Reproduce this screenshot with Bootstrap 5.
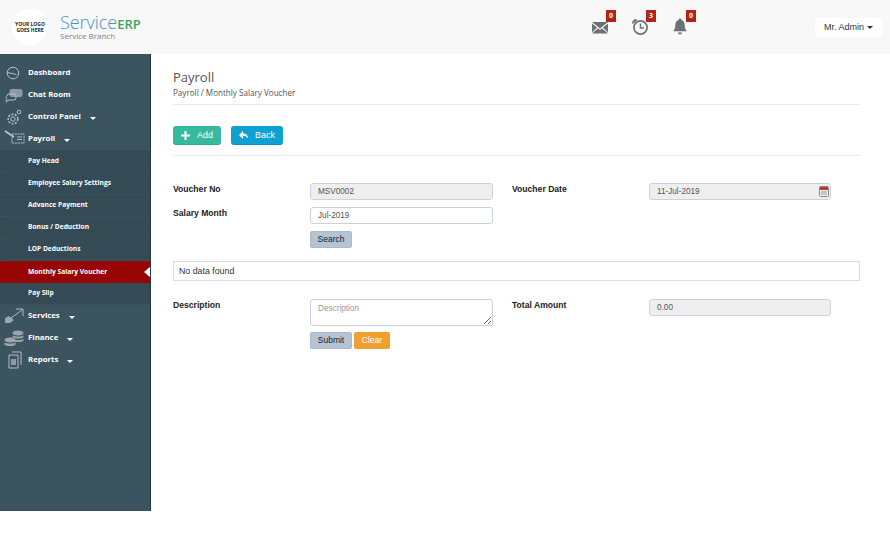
<!DOCTYPE html>
<html lang="en">
<head>
<meta charset="utf-8">
<title>Monthly Salary Voucher</title>
<link href="https://cdn.jsdelivr.net/npm/bootstrap@5.3.0/dist/css/bootstrap.min.css" rel="stylesheet">
<style>
html,body{height:100%;background:#fff;overflow:hidden}
body{font-family:"Liberation Sans",Arial,sans-serif;font-size:9px;color:#333}
.top-bar{height:54px;background:#f8f8f8;padding-left:12px}
.logo-disc{width:36px;height:36px;border-radius:50%;background:#fff;font:700 5px/6.5px "Open Sans",sans-serif;color:#222;text-align:center;flex:none}
.brand-box{margin-left:12px;line-height:1;width:82px;flex:none;margin-top:-2px}
.brand-name{font:300 18px/20px "Open Sans",sans-serif;color:#3f96c9;letter-spacing:-.05px;height:20px;display:flex;align-items:baseline}
.brand-name b{font:600 13px/14px "Open Sans",sans-serif;color:#3aa55c;letter-spacing:0}
.brand-sub{font:400 8px/9px "Open Sans",sans-serif;color:#78828a;margin-top:-1px}
.alert-set{margin-left:449px;gap:21px;margin-top:-1px}
.alert-item{position:relative;width:19px;height:19px}
.alert-item svg{display:block}
.alert-count{position:absolute;top:-7px;right:-6px;min-width:10px;height:12px;background:#b5221b;color:#fff;font:700 7px/12px "Open Sans",sans-serif;text-align:center}
.user-chip{margin-left:auto;margin-right:8px;width:67px;height:19px;background:#fff;border-radius:3px;font-size:9px;line-height:19px;text-align:center;color:#333}
.tri{display:inline-block;width:0;height:0;border-left:3px solid transparent;border-right:3px solid transparent;border-top:3px solid currentColor;vertical-align:middle;margin-left:3px}
.page-body{height:457px}
.side-nav{width:151px;background:#3c5360;border-right:1px solid #26363f;padding-top:8px;flex:none}
.menu-row{height:22.1px;display:flex;align-items:center;color:#fff;font:700 7.8px/1 "Open Sans",sans-serif;padding-left:28px;position:relative;text-decoration:none}
.menu-row .tri{margin-left:9px;margin-top:2px}
.menu-row svg{position:absolute;left:4px;top:2px}
.sub-row{background:#344a55;font-size:6.65px;border-bottom:1px dotted #3c5360}
.sub-active{background:#980505;border-bottom:0}
.sub-active::after{content:"";position:absolute;right:0;top:6px;border:5px solid transparent;border-right:6px solid #fff;border-left:0}
.work-area{flex:1;padding:15px 30px 0 22px;min-width:0}
.page-title{font:400 13px/16px "Open Sans",sans-serif;color:#555;margin:0}
.crumb{font:400 8.1px/12px "Open Sans",sans-serif;color:#555;margin-top:2px}
.rule-line{height:1px;background:#e9e9e9;border:0;opacity:1;margin:0}
.title-rule{margin-top:5px}
.action-row{gap:10px;padding:21px 0 10px}
.act-btn{height:19px;padding:0;border:0;border-bottom:1px solid rgba(0,0,0,.1);border-radius:3px;color:#fff;font-size:9px;line-height:18px;display:flex;align-items:center;justify-content:center;gap:7px}
.act-add{width:48px;background:#36b99f}
.act-back{width:52px;background:#0ea2d2}
.form-sheet{display:grid;grid-template-columns:137px 183px 19px 137px 182px;margin-top:27px;align-items:start}
.upper-sheet{margin-top:27px}
.field-label{font-weight:700;font-size:8.6px;line-height:12px;color:#222;margin:0}
.field-box.form-control{height:17px;min-height:17px;font-size:8.2px;line-height:13px;padding:1px 7px;border:1px solid #c9d3dc;border-radius:3px;color:#555;background-color:#fff;box-shadow:none}
.field-box.form-control:disabled{background-color:#eee}
.field-box.form-control::placeholder{color:#999}
textarea.field-box.form-control{height:27px;padding-top:2px}
.date-wrap{position:relative}
.date-wrap svg{position:absolute;right:2px;top:3px}
.row-gap{grid-column:1/-1;height:7px}
.form-btn{height:17px;padding:0;border:1px solid transparent;border-radius:2px;font-size:8.5px;line-height:15px}
.btn-slate{width:42px;background:#b4c4d4;color:#222;border-color:#a9bacb}
.btn-amber{width:36px;background:#f0a030;color:#fff;margin-left:2px}
.empty-note{height:20px;border:1px solid #ddd;margin-top:13px;padding-left:5px;font-size:8.8px;line-height:18px;color:#333}
.form-sheet.lower-sheet{margin-top:18px}
.search-gap{margin-top:7px}
.ctl-gap{margin-top:6px}
</style>
</head>
<body>
<header class="top-bar d-flex align-items-center">
  <div class="logo-disc d-flex align-items-center justify-content-center">YOUR LOGO<br>GOES HERE</div>
  <div class="brand-box">
    <div class="brand-name">Service<b>ERP</b></div>
    <div class="brand-sub">Service Branch</div>
  </div>
  <div class="alert-set d-flex align-items-center">
    <div class="alert-item">
      <svg width="18" height="19" viewBox="0 0 18 19"><path fill="#6b7176" d="M1 5h16L9 11.500zM1 6.500v9l5-5zM17 6.500v9l-5-5zM1 16.500l6-5.200 2 1.600 2-1.600 6 5.200z"/></svg>
      <span class="alert-count">0</span>
    </div>
    <div class="alert-item">
      <svg width="19" height="19" viewBox="0 0 19 19"><circle cx="9.500" cy="10.500" r="6.600" fill="none" stroke="#6b7176" stroke-width="1.700"/><path d="M9.500 6.500v4.500h3.500" fill="none" stroke="#6b7176" stroke-width="1.500"/><path fill="#6b7176" d="M1 6.500C1 4 3 2 5.500 2L6 3.200 2 6.800z"/></svg>
      <span class="alert-count">3</span>
    </div>
    <div class="alert-item">
      <svg width="19" height="19" viewBox="0 0 19 19"><path fill="#6b7176" d="M9 1.500c.9 0 1.400.6 1.400 1.400 2.300.8 3.300 2.800 3.300 5.400 0 3 1 4.700 2.300 6H2c1.300-1.300 2.300-3 2.300-6 0-2.600 1-4.600 3.300-5.400C7.600 2.100 8.100 1.500 9 1.500zM7 15.500h4c0 1.200-.9 2-2 2s-2-.8-2-2z"/></svg>
      <span class="alert-count">0</span>
    </div>
  </div>
  <div class="user-chip">Mr. Admin<span class="tri"></span></div>
</header>

<div class="page-body d-flex">
  <nav class="side-nav">
    <a class="menu-row" href="#"><svg width="20" height="18" viewBox="0 0 20 18" fill="none" stroke="#b6c0c6"><circle cx="9" cy="9" r="5.800"/><path d="M3.500 8.500l9 2"/></svg>Dashboard</a>
    <a class="menu-row" href="#"><svg width="20" height="18" viewBox="0 0 20 18"><path fill="#8d9ba3" d="M8 3h8a2.500 2.500 0 0 1 2.500 2.500v3A2.500 2.500 0 0 1 16 11H8a2.500 2.500 0 0 1-2.500-2.500v-3A2.500 2.500 0 0 1 8 3z"/><path fill="none" stroke="#b6c0c6" d="M5 8h5a2 2 0 0 1 2 2v2a2 2 0 0 1-2 2H5l-3 2 1-2.500A2 2 0 0 1 3 10a2 2 0 0 1 2-2z"/></svg>Chat Room</a>
    <a class="menu-row" href="#"><svg width="20" height="18" viewBox="0 0 20 18" fill="none" stroke="#b6c0c6"><circle cx="9" cy="11" r="2.200"/><circle cx="9" cy="11" r="4.800" stroke-width="1.600" stroke-dasharray="2 1.400"/><circle cx="15" cy="4" r="1.800"/></svg>Control Panel <span class="tri"></span></a>
    <a class="menu-row" href="#"><svg width="22" height="16" viewBox="0 0 22 16" fill="none" stroke="#b6c0c6"><path d="M8 4h12v9H8z" stroke-dasharray="2 .8"/><path d="M1 1l9 6" stroke-width="2"/><path d="M13 7h5M13 9.500h5"/></svg>Payroll <span class="tri"></span></a>
    <a class="menu-row sub-row" href="#">Pay Head</a>
    <a class="menu-row sub-row" href="#">Employee Salary Settings</a>
    <a class="menu-row sub-row" href="#">Advance Payment</a>
    <a class="menu-row sub-row" href="#">Bonus / Deduction</a>
    <a class="menu-row sub-row" href="#">LOP Deductions</a>
    <a class="menu-row sub-row sub-active" href="#">Monthly Salary Voucher</a>
    <a class="menu-row sub-row" href="#">Pay Slip</a>
    <a class="menu-row" href="#"><svg width="20" height="18" viewBox="0 0 20 18"><path fill="#9aa6ad" d="M1 11l4-2 5 4-4 3H1z"/><path fill="none" stroke="#b6c0c6" d="M12 2h7v7M7 11l11-8"/></svg>Services <span class="tri"></span></a>
    <a class="menu-row" href="#"><svg width="20" height="18" viewBox="0 0 20 18" fill="#9aa6ad"><ellipse cx="14" cy="4" rx="5.500" ry="2.500"/><path d="M8.500 6c1 2 10 2 11 0v2c-1 2-10 2-11 0zM8.500 9.500c1 2 10 2 11 0v2c-1 2-10 2-11 0z"/><ellipse cx="6" cy="11" rx="5.500" ry="2.500"/><path d="M.5 13c1 2 10 2 11 0v2.500c-1 2-10 2-11 0z"/></svg>Finance <span class="tri"></span></a>
    <a class="menu-row" href="#"><svg width="20" height="18" viewBox="0 0 20 18" fill="none" stroke="#b6c0c6"><path d="M5 4h9v13H5z"/><path d="M8 1h9v13"/><path fill="#8d9ba3" stroke="none" d="M7 8h5v6H7z"/></svg>Reports <span class="tri"></span></a>
  </nav>

  <main class="work-area">
    <h1 class="page-title">Payroll</h1>
    <div class="crumb">Payroll / Monthly Salary Voucher</div>
    <hr class="rule-line title-rule">
    <div class="action-row d-flex">
      <button type="button" class="btn act-btn act-add"><svg width="9" height="9" viewBox="0 0 9 9"><path fill="#fff" d="M3.500 0h2v3.500H9v2H5.500V9h-2V5.500H0v-2h3.500z"/></svg>Add</button>
      <button type="button" class="btn act-btn act-back"><svg width="9" height="8" viewBox="0 0 9 8"><path fill="#fff" d="M4 0v2.500c3 0 5 1.500 5 5C8 5.500 6.500 5 4 5v3L0 4z"/></svg>Back</button>
    </div>
    <hr class="rule-line">

    <div class="form-sheet upper-sheet">
      <label class="field-label">Voucher No</label>
      <input class="form-control field-box" value="MSV0002" disabled>
      <span></span>
      <label class="field-label">Voucher Date</label>
      <div class="date-wrap">
        <input class="form-control field-box" value="11-Jul-2019" disabled>
        <svg width="10" height="11" viewBox="0 0 10 11"><rect x=".5" y=".5" width="9" height="10" rx="1" fill="#eee" stroke="#888"/><rect x="1" y="1" width="8" height="3" fill="#c0392b"/><path d="M2 6h6M2 8h6" stroke="#999"/></svg>
      </div>
      <div class="row-gap"></div>
      <label class="field-label">Salary Month</label>
      <div>
        <input class="form-control field-box" value="Jul-2019">
        <button type="button" class="btn form-btn btn-slate search-gap">Search</button>
      </div>
    </div>

    <div class="empty-note">No data found</div>

    <div class="form-sheet lower-sheet">
      <label class="field-label">Description</label>
      <div>
        <textarea class="form-control field-box" placeholder="Description"></textarea>
        <div class="d-flex ctl-gap">
          <button type="button" class="btn form-btn btn-slate">Submit</button>
          <button type="button" class="btn form-btn btn-amber">Clear</button>
        </div>
      </div>
      <span></span>
      <label class="field-label">Total Amount</label>
      <input class="form-control field-box" value="0.00" disabled>
    </div>
  </main>
</div>
</body>
</html>
